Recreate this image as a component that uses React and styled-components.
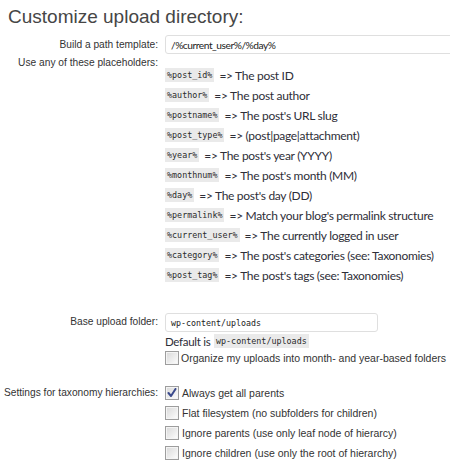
import React from 'react';
import styled, { createGlobalStyle } from 'styled-components';

const GlobalStyle = createGlobalStyle`
  html, body {
    margin: 0;
    padding: 0;
    background: #ffffff;
  }
  body {
    font-family: "Liberation Sans", Arial, sans-serif;
    font-size: 10.5px;
    color: #333333;
  }
`;

const Page = styled.div`
  width: 450px;
  height: 468px;
  overflow: hidden;
  background: #ffffff;
`;

const Title = styled.h2`
  margin: 0;
  padding: 4px 0 0 8px;
  height: 31px;
  font-family: "Liberation Sans", Arial, sans-serif;
  font-weight: normal;
  font-size: 19px;
  line-height: 26px;
  color: #464646;
`;

const FormGrid = styled.div`
  display: grid;
  grid-template-columns: 158px 1fr;
  column-gap: 7px;
  align-items: start;
`;

const Label = styled.div`
  display: flex;
  justify-content: flex-end;
  white-space: nowrap;
  font-size: 10.2px;
  line-height: ${(p) => p.$line || 18}px;
  padding-top: ${(p) => p.$top || 0}px;
  color: #333333;
`;

const Field = styled.div`
  display: flex;
  flex-direction: column;
  padding-top: ${(p) => p.$top || 0}px;
  min-width: 0;
`;

const TextInput = styled.div`
  box-sizing: border-box;
  width: ${(p) => p.$width}px;
  height: 19px;
  border: 1px solid #dfdfdf;
  border-radius: 3px;
  background: #ffffff;
  padding: 0 5px;
  display: flex;
  align-items: center;
  white-space: nowrap;
  overflow: hidden;
  font-family: ${(p) =>
    p.$mono
      ? '"DejaVu Sans Mono", "Liberation Mono", monospace'
      : 'Lato, "Open Sans", sans-serif'};
  font-size: ${(p) => (p.$mono ? '8.3px' : '10.2px')};
  letter-spacing: ${(p) => (p.$mono ? '0' : '-0.45px')};
  color: #222222;
`;

const PlaceholderRow = styled.div`
  display: flex;
  align-items: center;
  height: 20px;
  white-space: nowrap;
`;

const Code = styled.code`
  font-family: "DejaVu Sans Mono", "Liberation Mono", monospace;
  font-size: 8.4px;
  letter-spacing: 0;
  background: #eaeaea;
  color: #2a2a2a;
  padding: 0 2px;
  height: 14px;
  line-height: 14px;
  display: inline-block;
  margin-right: ${(p) => p.$gap ?? 5}px;
  margin-left: ${(p) => p.$left || 0}px;
`;

const Desc = styled.span`
  font-family: Lato, "Open Sans", sans-serif;
  font-size: 12px;
  letter-spacing: -0.3px;
  color: #2e2e38;
`;

const Hint = styled.div`
  display: flex;
  align-items: center;
  height: 18px;
  font-family: Lato, "Open Sans", sans-serif;
  font-size: 11.5px;
  letter-spacing: -0.3px;
  color: #2e2e38;
  white-space: nowrap;
`;

const CheckRow = styled.label`
  display: flex;
  align-items: center;
  height: ${(p) => p.$height || 20}px;
  gap: ${(p) => p.$gap}px;
  white-space: nowrap;
  color: #333333;
`;

const Box = styled.span`
  box-sizing: border-box;
  width: 14px;
  height: 14px;
  flex: none;
  border: 1px solid #9d9d9d;
  background: linear-gradient(135deg, #d8d8d8 0%, #f0f0f0 65%, #ffffff 100%);
  box-shadow: inset 0 0 0 1px #f4f4f4;
  display: flex;
  align-items: center;
  justify-content: center;
`;

function Checkbox({ checked }) {
  return (
    <Box>
      {checked && (
        <svg width="10" height="10" viewBox="0 0 10 10">
          <path
            d="M1.5 5 L4 8 L8.5 1"
            fill="none"
            stroke="#3b4a8c"
            strokeWidth="2"
            strokeLinecap="round"
            strokeLinejoin="round"
          />
        </svg>
      )}
    </Box>
  );
}

const placeholders = [
  ['%post_id%', '=> The post ID'],
  ['%author%', '=> The post author'],
  ['%postname%', "=> The post's URL slug"],
  ['%post_type%', '=> (post|page|attachment)'],
  ['%year%', "=> The post's year (YYYY)"],
  ['%monthnum%', "=> The post's month (MM)"],
  ['%day%', "=> The post's day (DD)"],
  ['%permalink%', "=> Match your blog's permalink structure"],
  ['%current_user%', '=> The currently logged in user'],
  ['%category%', "=> The post's categories (see: Taxonomies)"],
  ['%post_tag%', "=> The post's tags (see: Taxonomies)"],
];

const taxonomyOptions = [
  ['Always get all parents', true],
  ['Flat filesystem (no subfolders for children)', false],
  ['Ignore parents (use only leaf node of hierarcy)', false],
  ['Ignore children (use only the root of hierarchy)', false],
];

export default function App() {
  return (
    <Page>
      <GlobalStyle />
      <Title>Customize upload directory:</Title>
      <FormGrid>
        <Label $line={19}>Build a path template:</Label>
        <Field>
          <TextInput $width={300}>/%current_user%/%day%</TextInput>
        </Field>

        <Label>Use any of these placeholders:</Label>
        <Field $top={11}>
          {placeholders.map(([code, text]) => (
            <PlaceholderRow key={code}>
              <Code>{code}</Code>
              <Desc>{text}</Desc>
            </PlaceholderRow>
          ))}
        </Field>

        <Label $top={28} $line={18}>Base upload folder:</Label>
        <Field $top={28}>
          <TextInput $width={213} $mono>
            wp-content/uploads
          </TextInput>
          <Hint>
            Default is&nbsp;<Code $gap={0} $left={1}>wp-content/uploads</Code>
          </Hint>
          <CheckRow $gap={2} $height={16}>
            <Checkbox />
            Organize my uploads into month- and year-based folders
          </CheckRow>
        </Field>

        <Label $top={17} $line={20}>Settings for taxonomy hierarchies:</Label>
        <Field $top={17}>
          {taxonomyOptions.map(([text, checked]) => (
            <CheckRow key={text} $gap={3}>
              <Checkbox checked={checked} />
              {text}
            </CheckRow>
          ))}
        </Field>
      </FormGrid>
    </Page>
  );
}
